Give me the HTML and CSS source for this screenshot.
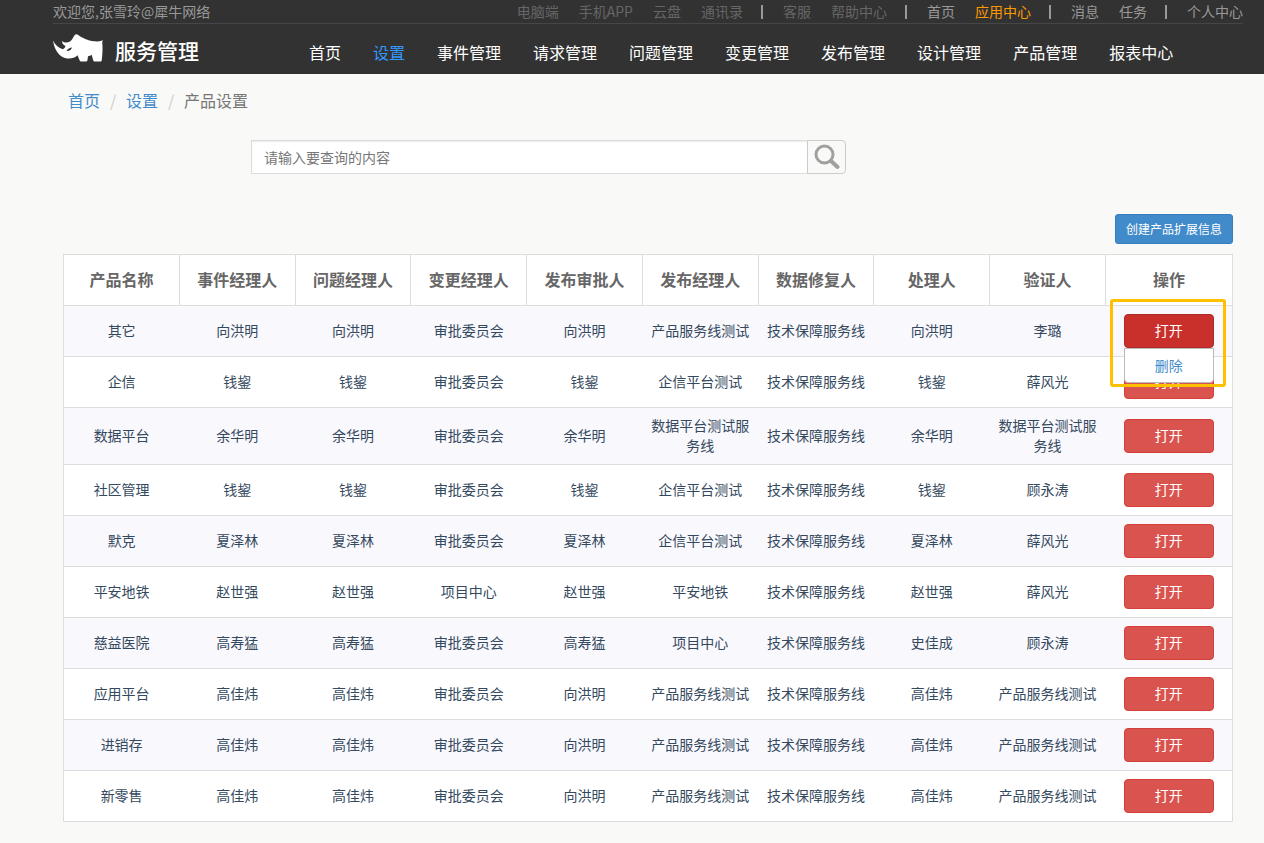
FILE: index.html
```html
<!DOCTYPE html>
<html lang="zh-CN">
<head>
<meta charset="utf-8">
<meta name="viewport" content="width=device-width, initial-scale=1">
<title>产品设置 - 服务管理</title>
<link rel="stylesheet" href="styles.css">
</head>
<body>
<header class="header">
  <div class="topbar">
    <span class="welcome">欢迎您,张雪玲@犀牛网络</span>
    <nav class="toplinks" aria-label="快捷导航">
      <a class="dim" href="#">电脑端</a>
      <a class="dim" href="#">手机APP</a>
      <a class="dim" href="#">云盘</a>
      <a class="dim" href="#">通讯录</a>
      <span class="bar"></span>
      <a class="dim" href="#">客服</a>
      <a class="dim" href="#">帮助中心</a>
      <span class="bar"></span>
      <a href="#">首页</a>
      <a class="current" href="#">应用中心</a>
      <span class="bar"></span>
      <a href="#">消息</a>
      <a href="#">任务</a>
      <span class="bar"></span>
      <a href="#">个人中心</a>
    </nav>
  </div>
  <div class="mainbar">
    <a class="brand" href="#">
      <svg class="logo" viewBox="0 0 50 28" width="50" height="28" aria-hidden="true">
        <path fill="#fff" d="M0 6.500C2 11 5.500 14 10 15.300C11.500 14.300 12.300 13.300 12.400 12C10 10.800 9 9.500 9.100 7C11.500 9 14.500 8.800 17 7.500C19.500 6 20.300 2.500 22 .8C23 -.2 24.300 .3 25.500 1.200C29 3.800 35 6.500 41 7.300C44 7.700 47 7.300 50 6.200L49.200 8C49.800 14 49.500 21 48.700 26.500Q48.500 27.500 47.500 27.500H41.500Q40.500 27.500 40.300 26.500L38.600 20.800C37.700 21.500 36.500 22 35 22.200L34.400 26.500Q34 27.500 33 27.500H28Q27 27.500 26.700 26.500L24.500 21.300C22 24 18 25 14 24.500C6 23.300 1.500 16 0 6.500Z"/>
        <path fill="#323232" d="M13.500 17C14.500 14.800 17 13.800 19 13.500C18.500 15.500 16.500 17.300 13.500 17Z"/>
      </svg>
      <span>服务管理</span>
    </a>
    <nav class="mainnav" aria-label="主导航">
      <a href="#">首页</a>
      <a class="active" href="#">设置</a>
      <a href="#">事件管理</a>
      <a href="#">请求管理</a>
      <a href="#">问题管理</a>
      <a href="#">变更管理</a>
      <a href="#">发布管理</a>
      <a href="#">设计管理</a>
      <a href="#">产品管理</a>
      <a href="#">报表中心</a>
    </nav>
  </div>
</header>

<main class="page">
  <nav class="breadcrumb" aria-label="面包屑">
    <a href="#">首页</a><span class="slash">/</span><a href="#">设置</a><span class="slash">/</span><span>产品设置</span>
  </nav>

  <form class="search">
    <input type="text" class="search-input" aria-label="查询内容" placeholder="请输入要查询的内容">
    <button type="button" class="search-btn" aria-label="查询">
      <svg viewBox="0 0 26 26" width="26" height="26" aria-hidden="true">
        <circle cx="10.500" cy="10.500" r="8.500" fill="none" stroke="#a0a0a0" stroke-width="3"/>
        <path d="M17 17L23.500 23" stroke="#a0a0a0" stroke-width="4" stroke-linecap="round"/>
      </svg>
    </button>
  </form>

  <div class="actions">
    <button type="button" class="create-btn">创建产品扩展信息</button>
  </div>

  <table class="grid">
    <thead>
      <tr><th>产品名称</th><th>事件经理人</th><th>问题经理人</th><th>变更经理人</th><th>发布审批人</th><th>发布经理人</th><th>数据修复人</th><th>处理人</th><th>验证人</th><th class="op">操作</th></tr>
    </thead>
    <tbody>
      <tr><td>其它</td><td>向洪明</td><td>向洪明</td><td>审批委员会</td><td>向洪明</td><td>产品服务线测试</td><td>技术保障服务线</td><td>向洪明</td><td>李璐</td><td class="op">
        <div class="dropdown">
          <button type="button" class="open-btn pressed" aria-expanded="true">打开</button>
          <div class="menu"><a href="#">删除</a></div>
          <div class="highlight"></div>
        </div></td></tr>
      <tr><td>企信</td><td>钱鋆</td><td>钱鋆</td><td>审批委员会</td><td>钱鋆</td><td>企信平台测试</td><td>技术保障服务线</td><td>钱鋆</td><td>薛风光</td><td class="op"><button type="button" class="open-btn">打开</button></td></tr>
      <tr><td>数据平台</td><td>余华明</td><td>余华明</td><td>审批委员会</td><td>余华明</td><td>数据平台测试服务线</td><td>技术保障服务线</td><td>余华明</td><td>数据平台测试服务线</td><td class="op"><button type="button" class="open-btn">打开</button></td></tr>
      <tr><td>社区管理</td><td>钱鋆</td><td>钱鋆</td><td>审批委员会</td><td>钱鋆</td><td>企信平台测试</td><td>技术保障服务线</td><td>钱鋆</td><td>顾永涛</td><td class="op"><button type="button" class="open-btn">打开</button></td></tr>
      <tr><td>默克</td><td>夏泽林</td><td>夏泽林</td><td>审批委员会</td><td>夏泽林</td><td>企信平台测试</td><td>技术保障服务线</td><td>夏泽林</td><td>薛风光</td><td class="op"><button type="button" class="open-btn">打开</button></td></tr>
      <tr><td>平安地铁</td><td>赵世强</td><td>赵世强</td><td>项目中心</td><td>赵世强</td><td>平安地铁</td><td>技术保障服务线</td><td>赵世强</td><td>薛风光</td><td class="op"><button type="button" class="open-btn">打开</button></td></tr>
      <tr><td>慈益医院</td><td>高寿猛</td><td>高寿猛</td><td>审批委员会</td><td>高寿猛</td><td>项目中心</td><td>技术保障服务线</td><td>史佳成</td><td>顾永涛</td><td class="op"><button type="button" class="open-btn">打开</button></td></tr>
      <tr><td>应用平台</td><td>高佳炜</td><td>高佳炜</td><td>审批委员会</td><td>向洪明</td><td>产品服务线测试</td><td>技术保障服务线</td><td>高佳炜</td><td>产品服务线测试</td><td class="op"><button type="button" class="open-btn">打开</button></td></tr>
      <tr><td>进销存</td><td>高佳炜</td><td>高佳炜</td><td>审批委员会</td><td>向洪明</td><td>产品服务线测试</td><td>技术保障服务线</td><td>高佳炜</td><td>产品服务线测试</td><td class="op"><button type="button" class="open-btn">打开</button></td></tr>
      <tr><td>新零售</td><td>高佳炜</td><td>高佳炜</td><td>审批委员会</td><td>向洪明</td><td>产品服务线测试</td><td>技术保障服务线</td><td>高佳炜</td><td>产品服务线测试</td><td class="op"><button type="button" class="open-btn">打开</button></td></tr>
    </tbody>
  </table>
</main>
</body>
</html>
```
FILE: styles.css
```css
* { box-sizing: border-box; }

body {
  margin: 0;
  background: #f9f9f7;
  color: #34495e;
  font-family: "Noto Sans CJK SC", sans-serif;
  font-size: 14px;
  line-height: 20px;
}

a { color: inherit; text-decoration: none; }
button, input { font: inherit; }

/* Header */
.header {
  background: #323232;
  padding: 0 21px 0 53px;
}
.topbar {
  display: flex;
  justify-content: space-between;
  height: 24px;
  padding-top: 1px;
  border-bottom: 1px solid #464646;
  color: #999;
}
.toplinks { display: flex; }
.toplinks a { margin-left: 20px; }
.toplinks .dim { color: #666; }
.toplinks .current { color: #ff9900; }
.bar {
  width: 2px;
  height: 14px;
  margin: 4px 0 0 18px;
  background: #999;
}
.mainbar {
  display: flex;
  align-items: flex-start;
  height: 50px;
}
.brand {
  display: flex;
  align-items: flex-start;
  flex: 0 0 256px;
  gap: 12px;
  padding-top: 10px;
  color: #fff;
  font-size: 21px;
  font-weight: 500;
  line-height: 32px;
}
.mainnav {
  display: flex;
  gap: 32px;
  padding-top: 16px;
  color: #fff;
  font-size: 16px;
  line-height: 24px;
  white-space: nowrap;
}
.mainnav .active { color: #3399ff; }

/* Content */
.page { padding: 15px 31px 21px 63px; }

.breadcrumb {
  padding-left: 5px;
  color: #777;
  font-size: 16px;
  line-height: 22px;
}
.breadcrumb a { color: #428bca; }
.slash {
  display: inline-block;
  width: 26px;
  color: #ccc;
  text-align: center;
}

.search {
  display: flex;
  width: 595px;
  max-width: 100%;
  margin: 29px 0 0 188px;
}
.search-input {
  flex: 1;
  min-width: 0;
  height: 34px;
  padding: 6px 12px;
  border: 1px solid #ddd;
  border-right: 0;
  background: #fff;
  box-shadow: inset 0 1px 1px rgba(0, 0, 0, 0.08);
  color: #555;
}
.search-input::placeholder { color: #777; opacity: 1; }
.search-btn {
  display: flex;
  justify-content: center;
  width: 39px;
  height: 34px;
  padding: 3px 0 0;
  border: 1px solid #ccc;
  border-radius: 0 4px 4px 0;
  background: #f9f9f7;
}

.actions {
  display: flex;
  justify-content: flex-end;
  margin: 40px 0 10px;
}
.create-btn {
  height: 30px;
  padding: 0 10px;
  border: 1px solid #357ebd;
  border-radius: 3px;
  background: #428bca;
  color: #fff;
  font-size: 12px;
}

/* Table */
.grid {
  width: 100%;
  table-layout: fixed;
  border: 1px solid #ddd;
  border-collapse: collapse;
  background: #fff;
}
.grid th,
.grid td {
  padding: 7px 8px 9px;
  border-top: 1px solid #ddd;
  text-align: center;
  vertical-align: middle;
}
.grid th {
  border: 1px solid #ddd;
  color: #666;
  font-size: 16px;
  font-weight: 700;
  line-height: 34px;
  white-space: nowrap;
}
.grid th.op { width: 127px; }
.grid td.op { padding: 8px; }
.grid tbody tr:nth-child(odd) { background: #f9f8fd; }

.open-btn {
  display: block;
  width: 90px;
  height: 34px;
  margin: 0 auto;
  padding: 0 0 2px;
  border: 1px solid #d43f3a;
  border-radius: 4px;
  background: #d9534f;
  color: #fff;
}
.open-btn.pressed {
  border-color: #ac2925;
  background: #c9302c;
}

.dropdown {
  position: relative;
  width: 90px;
  margin: 0 auto;
}
.menu {
  position: absolute;
  z-index: 1;
  top: 100%;
  left: 0;
  width: 100%;
  padding: 6px 0 7px;
  border: 1px solid #bbb;
  border-radius: 0 0 4px 4px;
  background: #fff;
  color: #428bca;
}
.highlight {
  position: absolute;
  z-index: 2;
  inset: -15px -12px -39px -14px;
  border: 3px solid #ffc000;
  border-radius: 3px;
  pointer-events: none;
}
```
